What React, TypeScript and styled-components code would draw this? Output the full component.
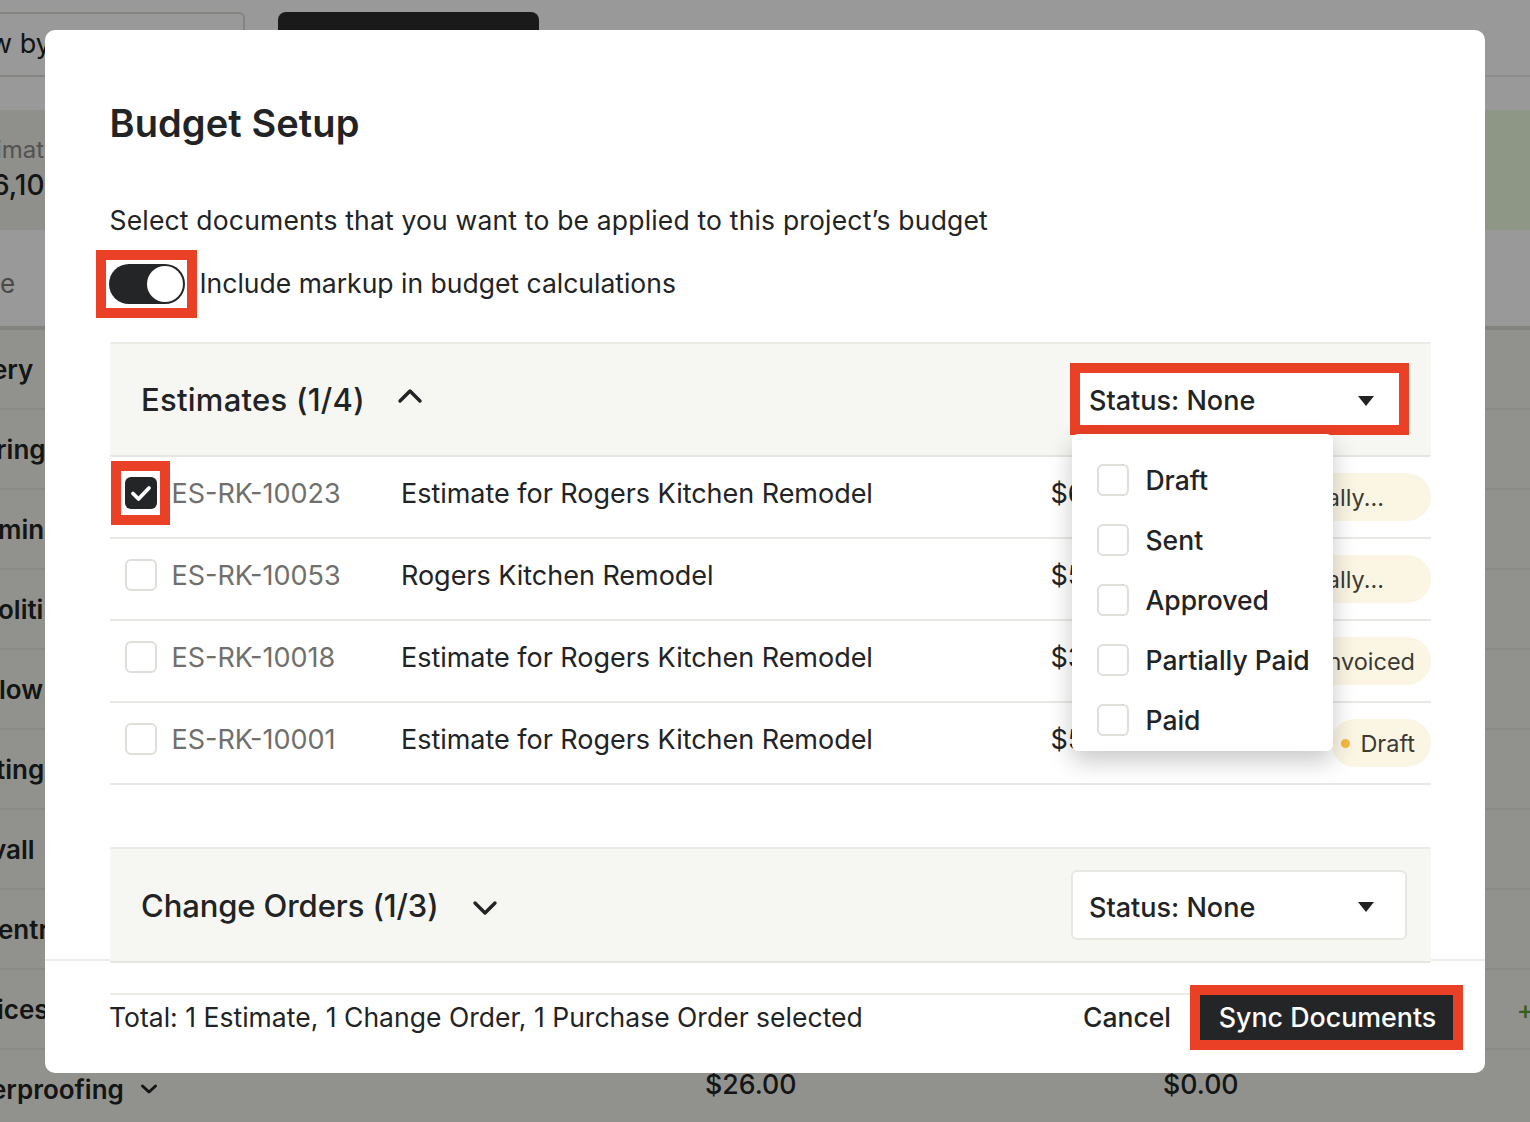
import React from "react";
import styled, { createGlobalStyle } from "styled-components";

const Global = createGlobalStyle`
  html, body { margin: 0; padding: 0; height: 1122px; overflow: hidden; background: #f2f3eb; }
  * { box-sizing: border-box; }
  body { font-family: Inter, "Noto Sans", sans-serif; color: #222324; }
`;

const Page = styled.div`
  width: 1530px;
  height: 1122px;
  overflow: hidden;
  background: #ffffff;
  display: flex;
  flex-direction: column;
`;
const TopBar = styled.div`
  height: 77px;
  display: flex;
  gap: 33px;
  padding-top: 12px;
  border-bottom: 2px solid #eaeae6;
  flex: none;
`;
const ViewBy = styled.div`
  width: 255px;
  height: 65px;
  margin-left: -10px;
  border: 2px solid #dedcd6;
  border-radius: 6px;
  font-size: 27px;
  line-height: 60px;
  color: #222324;
  text-indent: -2px;
`;
const BlackBtn = styled.div`
  width: 261px;
  height: 60px;
  background: #2c2c2c;
  border-radius: 8px;
`;
const Summary = styled.div`
  margin-top: 33px;
  height: 120px;
  display: flex;
  flex: none;
`;
const SummaryLeft = styled.div`
  flex: 1;
  background: #eeeee8;
  padding-top: 26px;
`;
const SummaryRight = styled.div`
  width: 160px;
  background: #edfade;
`;
const SumLabel = styled.div`
  font-size: 24px;
  line-height: 28px;
  color: #8a8a86;
  margin-left: -4px;
`;
const SumValue = styled.div`
  font-size: 28px;
  line-height: 42px;
  font-weight: 500;
  margin-left: -8px;
`;
const TableHead = styled.div`
  height: 100px;
  flex: none;
  font-size: 26px;
  line-height: 108px;
  color: #7c7c78;
  background: #ffffff;
  border-bottom: 4px solid #dadad6;
`;
const BgRow = styled.div`
  height: 80px;
  flex: none;
  display: flex;
  align-items: center;
  justify-content: space-between;
  background: #f2f3eb;
  border-bottom: 2px solid #e4e4de;
  font-size: 26px;
  font-weight: 600;
  color: #222324;
`;
const BgLabel = styled.span<{ $offset: number }>`
  margin-left: ${(p) => p.$offset}px;
`;
const BgPlus = styled.span`
  color: #5ba02a;
  font-size: 26px;
  font-weight: 500;
  margin-right: -4px;
`;
const BgLast = styled.div`
  display: flex;
  align-items: center;
  flex: none;
  height: 78px;
  background: #f2f3eb;
  font-size: 26px;
  font-weight: 600;
`;
const BgChevronBox = styled.span`
  display: inline-flex;
  margin-left: 16px;
`;
const BgAmount = styled.span<{ $w: number }>`
  width: ${(p) => p.$w}px;
  font-size: 26.7px;
  font-weight: 500;
  flex: none;
  margin-top: -10px;
`;
const BgName = styled.span`
  display: inline-flex;
  align-items: center;
  width: 705px;
  flex: none;
`;

const Overlay = styled.div`
  position: fixed;
  inset: 0;
  background: rgba(0, 0, 0, 0.4);
  display: flex;
  justify-content: center;
  align-items: flex-start;
  padding-top: 30px;
`;
const Modal = styled.div`
  position: relative;
  width: 1440px;
  height: 1043px;
  background: #fff;
  border-radius: 10px;
  display: flex;
  flex-direction: column;
`;
const Body = styled.div`
  flex: 1;
  min-height: 0;
  overflow: hidden;
  padding: 69px 54px 0 64.5px;
  border-radius: 10px;
`;
const Title = styled.h2`
  margin: 0;
  font-size: 38px;
  line-height: 48px;
  font-weight: 600;
  letter-spacing: 0.1px;
  color: #222324;
`;
const Lead = styled.p`
  margin: 53px 0 0;
  font-size: 26.5px;
  line-height: 40px;
  letter-spacing: 0.18px;
  color: #222324;
`;
const ToggleRow = styled.div`
  margin: 10px 0 24px;
  height: 68px;
  display: flex;
  align-items: center;
  font-size: 26.5px;
  color: #222324;
`;
const ToggleLabel = styled.span`
  padding-bottom: 2px;
`;
const Highlight = styled.div`
  border: 10px solid #ea4025;
  display: flex;
  align-items: center;
  justify-content: center;
  flex: none;
  background: #fff;
`;
const ToggleBox = styled(Highlight)`
  width: 101px;
  height: 68px;
  margin-left: -14px;
  margin-right: 3px;
  padding-left: 2px;
`;
const Toggle = styled.span`
  position: relative;
  display: block;
  width: 76px;
  height: 40px;
  border-radius: 20px;
  background: #242526;
`;
const Knob = styled.span`
  position: absolute;
  top: 2px;
  right: 2px;
  width: 36px;
  height: 36px;
  border-radius: 50%;
  background: #fff;
`;
const Panel = styled.div<{ $mt?: number }>`
  position: relative;
  z-index: 3;
  margin-top: ${(p) => p.$mt ?? 0}px;
  height: ${(p) => (p.$mt ? 116 : 115)}px;
  background: #f6f6f2;
  border-top: 2px solid #ebeae5;
  border-bottom: 2px solid #e6e5e0;
  border-radius: 2px;
  display: flex;
  align-items: center;
  justify-content: space-between;
  padding: 0 24px 0 31.5px;
`;
const PanelTitle = styled.div<{ $ls: number }>`
  display: flex;
  align-items: center;
  font-size: 31px;
  font-weight: 500;
  letter-spacing: ${(p) => p.$ls}px;
  color: #222324;
`;
const Chevron = styled.svg<{ $ml: number; $mt: number }>`
  margin-left: ${(p) => p.$ml}px;
  margin-top: ${(p) => p.$mt}px;
  flex: none;
`;
const SelectBox = styled.div`
  width: 336px;
  height: 70px;
  background: #fff;
  border: 2px solid #e8e7e2;
  border-radius: 6px;
  display: flex;
  align-items: center;
  justify-content: space-between;
  padding: 4px 31px 0 16px;
  font-size: 27px;
  font-weight: 500;
  color: #222324;
`;
const SelectHighlight = styled(Highlight)`
  width: 339px;
  height: 72px;
  margin-right: -2px;
  margin-top: -2px;
  justify-content: space-between;
  padding: 4px 25px 0 9px;
  font-size: 27px;
  font-weight: 500;
  color: #222324;
`;
const Caret = styled.span`
  width: 0;
  height: 0;
  border-left: 8px solid transparent;
  border-right: 8px solid transparent;
  border-top: 10px solid #222324;
`;
const Row = styled.div`
  height: 82px;
  display: flex;
  align-items: center;
  border-bottom: 2px solid #e8e8e4;
  font-size: 27px;
  padding-bottom: 8px;
`;
const CheckCell = styled.div`
  width: 62px;
  display: flex;
  justify-content: center;
  flex: none;
`;
const CheckHighlight = styled(Highlight)`
  width: 59px;
  height: 64px;
  margin-left: 1px;
  margin-right: 2px;
  padding-left: 2px;
`;
const Box = styled.span<{ $checked?: boolean }>`
  display: flex;
  align-items: center;
  justify-content: center;
  width: 32px;
  height: 32px;
  border-radius: 6px;
  flex: none;
  background: ${(p) => (p.$checked ? "#242526" : "#fff")};
  border: ${(p) => (p.$checked ? "none" : "2px solid #dfded8")};
`;
const Code = styled.div`
  width: 229.5px;
  flex: none;
  color: #6f706c;
`;
const Desc = styled.div`
  width: 649.5px;
  flex: none;
  letter-spacing: -0.03px;
  color: #222324;
`;
const Amount = styled.div`
  color: #222324;
`;
const Pill = styled.div<{ $pr: number; $w: number }>`
  margin-left: auto;
  align-self: flex-start;
  margin-top: 16px;
  height: 48px;
  width: ${(p) => p.$w}px;
  border-radius: 24px;
  background: #fbf6e4;
  display: flex;
  align-items: center;
  justify-content: flex-end;
  padding-right: ${(p) => p.$pr}px;
  font-size: 23.5px;
  color: #3c3a32;
`;
const PillDot = styled.span`
  width: 9px;
  height: 9px;
  border-radius: 50%;
  background: #f4b942;
  margin-right: 10px;
`;
const Menu = styled.div`
  position: absolute;
  z-index: 5;
  left: 1027px;
  top: 404px;
  width: 261px;
  height: 317px;
  background: #fff;
  border-radius: 6px;
  box-shadow: 0 10px 24px rgba(0, 0, 0, 0.22);
  padding: 16px 0 0 25px;
`;
const MenuItem = styled.div`
  height: 60px;
  display: flex;
  align-items: center;
  gap: 16.5px;
  font-size: 26.5px;
  font-weight: 500;
  color: #222324;
  white-space: nowrap;
`;
const NextLine = styled.div`
  margin-top: 30px;
  height: 2px;
  background: #ebeae5;
`;
const FooterRule = styled.div`
  position: absolute;
  z-index: 2;
  left: 0;
  right: 0;
  top: 929px;
  height: 2px;
  background: #ecece8;
`;
const Footer = styled.div`
  position: absolute;
  z-index: 4;
  left: 64px;
  right: 22px;
  bottom: 23px;
  height: 65px;
  display: flex;
  align-items: center;
  justify-content: space-between;
`;
const Total = styled.div`
  font-size: 26.5px;
  letter-spacing: 0.02px;
  padding-bottom: 2px;
  color: #222324;
`;
const Actions = styled.div`
  display: flex;
  align-items: center;
  gap: 19px;
`;
const Cancel = styled.button`
  border: 0;
  background: none;
  padding: 0 0 2px;
  font: 500 26.5px Inter, sans-serif;
  color: #222324;
`;
const SyncBox = styled(Highlight)`
  width: 273px;
  height: 65px;
`;
const Sync = styled.button`
  width: 253px;
  height: 45px;
  border: 0;
  padding: 0 0 2px 2px;
  background: #242526;
  color: #fff;
  font: 500 26.8px Inter, sans-serif;
`;

const Tick = () => (
  <svg width="24" height="20" viewBox="0 0 24 20" fill="none">
    <path d="M4 10.5 L9.5 16 L20 5" stroke="#fff" strokeWidth="3.8" strokeLinecap="round" strokeLinejoin="round" />
  </svg>
);

const rows = [
  { code: "ES-RK-10023", desc: "Estimate for Rogers Kitchen Remodel", amt: "$6", pill: "ally...", pr: 47, w: 180, checked: true },
  { code: "ES-RK-10053", desc: "Rogers Kitchen Remodel", amt: "$5", pill: "ally...", pr: 47, w: 180 },
  { code: "ES-RK-10018", desc: "Estimate for Rogers Kitchen Remodel", amt: "$3", pill: "nvoiced", pr: 16, w: 180 },
  { code: "ES-RK-10001", desc: "Estimate for Rogers Kitchen Remodel", amt: "$5", pill: "Draft", pr: 16, w: 100, dot: true },
];
const bgRows = [
  { t: "ery", o: -8 },
  { t: "ring", o: -4 },
  { t: "mina", o: -2 },
  { t: "oliti", o: -2 },
  { t: "low", o: -1 },
  { t: "ting", o: -4 },
  { t: "vall", o: -9 },
  { t: "entr", o: -2 },
  { t: "ices", o: -3 },
];
const statuses = ["Draft", "Sent", "Approved", "Partially Paid", "Paid"];

export default function App() {
  return (
    <>
      <Global />
      <Page>
        <TopBar>
          <ViewBy>w by</ViewBy>
          <BlackBtn />
        </TopBar>
        <Summary>
          <SummaryLeft>
            <SumLabel>imat</SumLabel>
            <SumValue>6,10</SumValue>
          </SummaryLeft>
          <SummaryRight />
        </Summary>
        <TableHead>e</TableHead>
        {bgRows.map((r, i) => (
          <BgRow key={r.t}>
            <BgLabel $offset={r.o}>{r.t}</BgLabel>
            {i === 8 && <BgPlus>+</BgPlus>}
          </BgRow>
        ))}
        <BgLast>
          <BgName>
            <BgLabel $offset={-9}>erproofing</BgLabel>
            <BgChevronBox>
              <svg width="18" height="12" viewBox="0 0 18 12" fill="none">
                <path d="M2.5 3 L9 9 L15.5 3" stroke="#222324" strokeWidth="3" strokeLinecap="round" strokeLinejoin="round" />
              </svg>
            </BgChevronBox>
          </BgName>
          <BgAmount $w={458}>$26.00</BgAmount>
          <BgAmount $w={120}>$0.00</BgAmount>
        </BgLast>
      </Page>
      <Overlay>
        <Modal>
          <Body>
            <Title>Budget Setup</Title>
            <Lead>Select documents that you want to be applied to this project’s budget</Lead>
            <ToggleRow>
              <ToggleBox>
                <Toggle>
                  <Knob />
                </Toggle>
              </ToggleBox>
              <ToggleLabel>Include markup in budget calculations</ToggleLabel>
            </ToggleRow>
            <Panel>
              <PanelTitle $ls={0.27}>
                Estimates (1/4)
                <Chevron $ml={32} $mt={-8} width="26" height="18" viewBox="0 0 26 18" fill="none">
                  <path d="M3 14 L13 4 L23 14" stroke="#222324" strokeWidth="3.4" strokeLinecap="round" strokeLinejoin="round" />
                </Chevron>
              </PanelTitle>
              <SelectHighlight>
                Status: None
                <Caret />
              </SelectHighlight>
            </Panel>
            {rows.map((r) => (
              <Row key={r.code}>
                {r.checked ? (
                  <CheckHighlight>
                    <Box $checked>
                      <Tick />
                    </Box>
                  </CheckHighlight>
                ) : (
                  <CheckCell>
                    <Box />
                  </CheckCell>
                )}
                <Code>{r.code}</Code>
                <Desc>{r.desc}</Desc>
                <Amount>{r.amt}</Amount>
                <Pill $pr={r.pr} $w={r.w}>
                  {r.dot && <PillDot />}
                  {r.pill}
                </Pill>
              </Row>
            ))}
            <Panel $mt={62}>
              <PanelTitle $ls={-0.1}>
                Change Orders (1/3)
                <Chevron $ml={33} $mt={6} width="26" height="18" viewBox="0 0 26 18" fill="none">
                  <path d="M3 4 L13 14 L23 4" stroke="#222324" strokeWidth="3.4" strokeLinecap="round" strokeLinejoin="round" />
                </Chevron>
              </PanelTitle>
              <SelectBox>
                Status: None
                <Caret />
              </SelectBox>
            </Panel>
            <NextLine />
          </Body>
          <Menu>
            {statuses.map((s) => (
              <MenuItem key={s}>
                <Box />
                {s}
              </MenuItem>
            ))}
          </Menu>
          <FooterRule />
          <Footer>
            <Total>Total: 1 Estimate, 1 Change Order, 1 Purchase Order selected</Total>
            <Actions>
              <Cancel>Cancel</Cancel>
              <SyncBox>
                <Sync>Sync Documents</Sync>
              </SyncBox>
            </Actions>
          </Footer>
        </Modal>
      </Overlay>
    </>
  );
}
